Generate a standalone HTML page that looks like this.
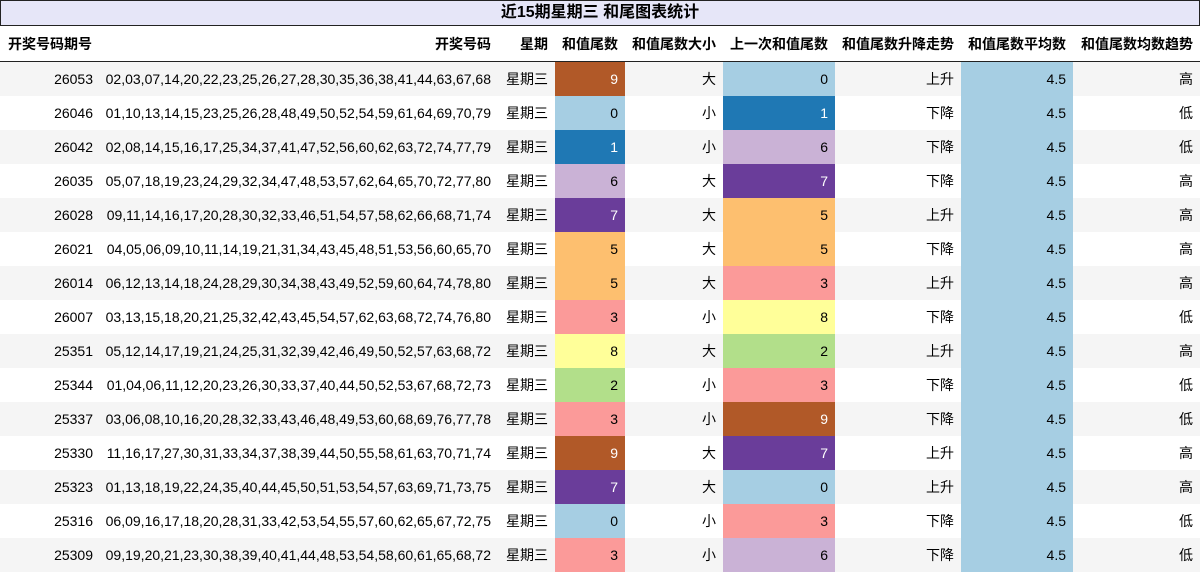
<!DOCTYPE html>
<html><head><meta charset="utf-8"><style>
body{margin:0;width:1200px;height:573px;overflow:hidden;background:#fff;font-family:"Liberation Sans","Noto Sans CJK SC",sans-serif;font-size:14px;color:#000}
.t{position:absolute;left:0;top:0;width:1198px;height:24px;border:1px solid #222;background:#e6e6f8;text-align:center;font-weight:bold;font-size:16px;line-height:24px}
table{position:absolute;left:0;top:26px;border-collapse:collapse;table-layout:fixed;width:1200px}
td,th{padding:0 7px 0 0;text-align:right;white-space:nowrap;overflow:hidden}
th{height:35px;font-weight:bold;border-bottom:1px solid #222}
th:first-child{text-align:left;padding-left:8px}
td{height:34px}
tr:nth-child(even) td{background:#f5f5f5}
td.c9{background:#b15928!important;color:#fff}td.c0{background:#a6cee3!important}td.c1{background:#1f78b4!important;color:#fff}
td.c6{background:#cab2d6!important}td.c7{background:#6a3d9a!important;color:#fff}td.c5{background:#fdbf6f!important}
td.c3{background:#fb9a99!important}td.c8{background:#ffff99!important}td.c2{background:#b2df8a!important}
td.av{background:#a6cee3!important}
</style></head><body>
<div class="t">近15期星期三 和尾图表统计</div>
<table>
<colgroup><col style="width:100px"><col style="width:398px"><col style="width:57px"><col style="width:70px"><col style="width:98px"><col style="width:112px"><col style="width:126px"><col style="width:112px"><col style="width:127px"></colgroup>
<tr><th>开奖号码期号</th><th>开奖号码</th><th>星期</th><th>和值尾数</th><th>和值尾数大小</th><th>上一次和值尾数</th><th>和值尾数升降走势</th><th>和值尾数平均数</th><th>和值尾数均数趋势</th></tr>
<tr><td>26053</td><td>02,03,07,14,20,22,23,25,26,27,28,30,35,36,38,41,44,63,67,68</td><td>星期三</td><td class="c9">9</td><td>大</td><td class="c0">0</td><td>上升</td><td class="av">4.5</td><td>高</td></tr>
<tr><td>26046</td><td>01,10,13,14,15,23,25,26,28,48,49,50,52,54,59,61,64,69,70,79</td><td>星期三</td><td class="c0">0</td><td>小</td><td class="c1">1</td><td>下降</td><td class="av">4.5</td><td>低</td></tr>
<tr><td>26042</td><td>02,08,14,15,16,17,25,34,37,41,47,52,56,60,62,63,72,74,77,79</td><td>星期三</td><td class="c1">1</td><td>小</td><td class="c6">6</td><td>下降</td><td class="av">4.5</td><td>低</td></tr>
<tr><td>26035</td><td>05,07,18,19,23,24,29,32,34,47,48,53,57,62,64,65,70,72,77,80</td><td>星期三</td><td class="c6">6</td><td>大</td><td class="c7">7</td><td>下降</td><td class="av">4.5</td><td>高</td></tr>
<tr><td>26028</td><td>09,11,14,16,17,20,28,30,32,33,46,51,54,57,58,62,66,68,71,74</td><td>星期三</td><td class="c7">7</td><td>大</td><td class="c5">5</td><td>上升</td><td class="av">4.5</td><td>高</td></tr>
<tr><td>26021</td><td>04,05,06,09,10,11,14,19,21,31,34,43,45,48,51,53,56,60,65,70</td><td>星期三</td><td class="c5">5</td><td>大</td><td class="c5">5</td><td>下降</td><td class="av">4.5</td><td>高</td></tr>
<tr><td>26014</td><td>06,12,13,14,18,24,28,29,30,34,38,43,49,52,59,60,64,74,78,80</td><td>星期三</td><td class="c5">5</td><td>大</td><td class="c3">3</td><td>上升</td><td class="av">4.5</td><td>高</td></tr>
<tr><td>26007</td><td>03,13,15,18,20,21,25,32,42,43,45,54,57,62,63,68,72,74,76,80</td><td>星期三</td><td class="c3">3</td><td>小</td><td class="c8">8</td><td>下降</td><td class="av">4.5</td><td>低</td></tr>
<tr><td>25351</td><td>05,12,14,17,19,21,24,25,31,32,39,42,46,49,50,52,57,63,68,72</td><td>星期三</td><td class="c8">8</td><td>大</td><td class="c2">2</td><td>上升</td><td class="av">4.5</td><td>高</td></tr>
<tr><td>25344</td><td>01,04,06,11,12,20,23,26,30,33,37,40,44,50,52,53,67,68,72,73</td><td>星期三</td><td class="c2">2</td><td>小</td><td class="c3">3</td><td>下降</td><td class="av">4.5</td><td>低</td></tr>
<tr><td>25337</td><td>03,06,08,10,16,20,28,32,33,43,46,48,49,53,60,68,69,76,77,78</td><td>星期三</td><td class="c3">3</td><td>小</td><td class="c9">9</td><td>下降</td><td class="av">4.5</td><td>低</td></tr>
<tr><td>25330</td><td>11,16,17,27,30,31,33,34,37,38,39,44,50,55,58,61,63,70,71,74</td><td>星期三</td><td class="c9">9</td><td>大</td><td class="c7">7</td><td>上升</td><td class="av">4.5</td><td>高</td></tr>
<tr><td>25323</td><td>01,13,18,19,22,24,35,40,44,45,50,51,53,54,57,63,69,71,73,75</td><td>星期三</td><td class="c7">7</td><td>大</td><td class="c0">0</td><td>上升</td><td class="av">4.5</td><td>高</td></tr>
<tr><td>25316</td><td>06,09,16,17,18,20,28,31,33,42,53,54,55,57,60,62,65,67,72,75</td><td>星期三</td><td class="c0">0</td><td>小</td><td class="c3">3</td><td>下降</td><td class="av">4.5</td><td>低</td></tr>
<tr><td>25309</td><td>09,19,20,21,23,30,38,39,40,41,44,48,53,54,58,60,61,65,68,72</td><td>星期三</td><td class="c3">3</td><td>小</td><td class="c6">6</td><td>下降</td><td class="av">4.5</td><td>低</td></tr>
</table>
</body></html>
